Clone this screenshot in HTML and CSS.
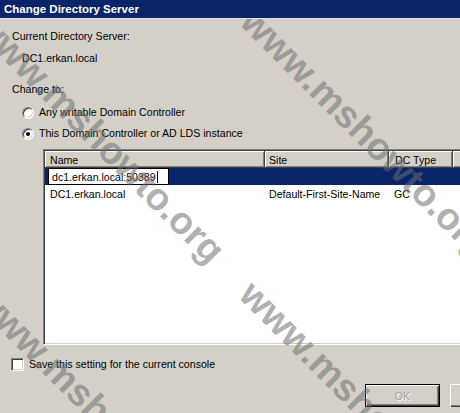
FILE: index.html
```html
<!DOCTYPE html>
<html>
<head>
<meta charset="utf-8">
<link rel="stylesheet" href="styles.css">
</head>
<body>
<div class="screen">
  <div class="dialog">
    <div class="titlebar">Change Directory Server</div>
    <div class="content">
      <div class="label">Current Directory Server:</div>
      <div class="value">DC1.erkan.local</div>
      <div class="label change">Change to:</div>
      <div class="option"><span class="radio"></span><span>Any writable Domain Controller</span></div>
      <div class="option second"><span class="radio checked"></span><span>This Domain Controller or AD LDS instance</span></div>
      <div class="list">
        <div class="lrow header">
          <div class="col c-name">Name</div>
          <div class="col c-site">Site</div>
          <div class="col c-type">DC Type</div>
          <div class="col c-extra"></div>
        </div>
        <div class="lrow selected">
          <div class="col c-name"><span class="edit">dc1.erkan.local:50389<span class="caret"></span></span></div>
        </div>
        <div class="lrow item">
          <div class="col c-name">DC1.erkan.local</div>
          <div class="col c-site">Default-First-Site-Name</div>
          <div class="col c-type">GC</div>
        </div>
      </div>
      <div class="check"><span class="box"></span><span>Save this setting for the current console</span></div>
      <div class="buttons">
        <button class="btn default" disabled>OK</button>
        <button class="btn">Cancel</button>
      </div>
    </div>
    <span class="wm wm1">www.mshowto.org</span>
    <span class="wm wm2">www.mshowto.org</span>
    <span class="wm wm3">www.mshowto.org</span>
    <span class="wm wm4">www.mshowto.org</span>
  </div>
</div>
</body>
</html>
```
FILE: styles.css
```css
html, body {
  margin: 0;
  padding: 0;
  overflow: hidden;
}
body {
  background: #d4d0c8;
  font-family: "Liberation Sans", Arial, sans-serif;
  font-size: 10.6px;
  color: #000;
}
.screen {
  width: 460px;
  height: 413px;
  overflow: hidden;
  position: relative;
}
.dialog {
  width: 536px;
  height: 413px;
  background: #d4d0c8;
  position: relative;
}
.titlebar {
  height: 18px;
  background: #0a246a;
  color: #fff;
  font-weight: bold;
  font-size: 11.5px;
  line-height: 18px;
  padding-left: 4px;
  border-bottom: 1px solid #e4e2dc;
  position: relative;
  z-index: 2;
}
.content {
  padding: 0 11px 0 12px;
}
.label {
  line-height: 13px;
  margin-top: 11px;
}
.value {
  line-height: 13px;
  margin-top: 9px;
  padding-left: 10px;
}
.label.change {
  margin-top: 18px;
}
.option {
  display: flex;
  align-items: center;
  gap: 5px;
  height: 13px;
  line-height: 13px;
  margin-top: 10px;
  padding-left: 10px;
}
.option.second {
  margin-top: 8px;
}
.radio {
  width: 12px;
  height: 12px;
  box-sizing: border-box;
  border-radius: 50%;
  background: #fff;
  border: 1px solid;
  border-color: #808080 #ffffff #ffffff #808080;
  box-shadow: inset 1px 1px 0 #404040, inset -1px -1px 0 #d4d0c8;
  position: relative;
  flex: none;
}
.radio.checked::after {
  content: "";
  position: absolute;
  left: 3px;
  top: 3px;
  width: 4px;
  height: 4px;
  border-radius: 50%;
  background: #000;
}
.list {
  margin-top: 9px;
  margin-left: 31px;
  height: 196px;
  box-sizing: border-box;
  background: #fff;
  border: 1px solid;
  border-color: #808080 #ffffff #ffffff #808080;
  box-shadow: inset 1px 1px 0 #404040, inset -1px -1px 0 #d4d0c8;
  padding: 1px;
}
.lrow {
  display: flex;
  height: 17px;
  line-height: 17px;
  white-space: nowrap;
}
.col {
  box-sizing: border-box;
  flex: none;
  overflow: hidden;
}
.c-name { width: 220px; padding-left: 5px; }
.c-site { width: 124px; padding-left: 4px; }
.c-type { width: 64px; padding-left: 5px; }
.c-extra { flex: 1; }
.header .col {
  background: #d4d0c8;
  line-height: 16px;
  padding-top: 1px;
  box-shadow: inset 1px 1px 0 #ffffff, inset -1px -1px 0 #808080;
  border-right: 1px solid #404040;
  border-bottom: 1px solid #404040;
}
.header .c-site { padding-left: 4px; }
.header .c-type { padding-left: 6px; }
.selected {
  background: #0a246a;
}
.selected .c-name {
  padding-left: 3px;
}
.edit {
  display: block;
  width: 121px;
  height: 17px;
  box-sizing: border-box;
  background: #fff;
  border: 1px solid #000;
  padding: 2px 0 0 3px;
  line-height: 13px;
}
.caret {
  display: inline-block;
  width: 1px;
  height: 12px;
  background: #000;
  vertical-align: -2px;
  margin-left: 1px;
}
.item {
  line-height: 16px;
  padding-top: 1px;
}
.check {
  display: flex;
  align-items: center;
  gap: 5px;
  height: 13px;
  margin-top: 13px;
  margin-left: -1px;
  line-height: 13px;
}
.box {
  width: 13px;
  height: 13px;
  box-sizing: border-box;
  background: #fff;
  border: 1px solid;
  border-color: #808080 #ffffff #ffffff #808080;
  box-shadow: inset 1px 1px 0 #404040, inset -1px -1px 0 #d4d0c8;
  flex: none;
}
.buttons {
  display: flex;
  justify-content: flex-end;
  gap: 10px;
  margin-top: 13px;
}
.btn {
  width: 75px;
  height: 23px;
  box-sizing: border-box;
  margin: 0;
  padding: 0;
  font-family: "Liberation Sans", Arial, sans-serif;
  font-size: 10.6px;
  background: #d4d0c8;
  color: #000;
  border: none;
  box-shadow: inset 1px 1px 0 #ffffff, inset -1px -1px 0 #404040, inset -2px -2px 0 #808080;
}
.btn.default {
  border: 1px solid #000;
  color: #a09c94;
  text-shadow: 1px 1px 0 #ffffff;
}
.wm {
  position: absolute;
  font-family: "Liberation Sans", Arial, sans-serif;
  font-weight: bold;
  font-size: 38px;
  line-height: 44px;
  white-space: nowrap;
  color: rgba(110, 110, 110, 0.55);
  transform-origin: 0 0;
  transform: rotate(45deg);
  pointer-events: none;
}
.wm1 { left: -4px; top: 3px; }
.wm2 { left: 263px; top: -1px; }
.wm3 { left: -4px; top: 277px; }
.wm4 { left: 262px; top: 272px; }
```
